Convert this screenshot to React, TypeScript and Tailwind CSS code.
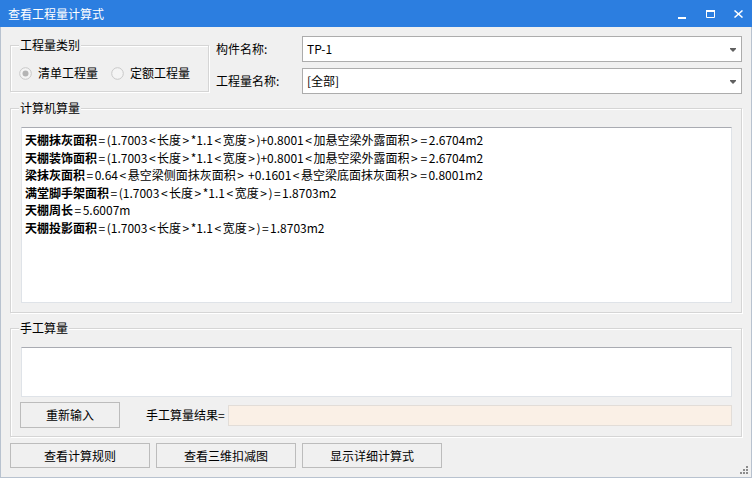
import React from "react";

function Group({ title, className, children }: { title: string; className: string; children?: React.ReactNode }) {
  return (
    <div className={"relative border border-[#d5d5d5] shadow-[inset_1px_1px_0_#ffffff,1px_1px_0_#ffffff] " + className}>
      <span className="absolute left-[8px] top-[-9px] bg-[#f0f0f0] px-[1px] text-[12px] leading-[16px] text-black">{title}</span>
      {children}
    </div>
  );
}

function Radio({ checked }: { checked?: boolean }) {
  return (
    <svg width="13" height="13" viewBox="0 0 13 13" className="shrink-0">
      <circle cx="6.5" cy="6.5" r="5.8" fill="#f4f4f4" stroke="#c8c8c8" strokeWidth="1" />
      {checked && <circle cx="6.5" cy="6.5" r="3" fill="#b4b4b4" />}
    </svg>
  );
}

function Combo({ value }: { value: string }) {
  return (
    <div className="flex h-[26px] items-center justify-between border border-[#acacac] bg-white pl-[4px] pr-[5px] text-[12px] text-black">
      <span>{value}</span>
      <svg width="6" height="4" viewBox="0 0 6 4" className="mt-[1px]">
        <path d="M0 0 H6 V1 L3 4 L0 1 Z" fill="#606060" />
      </svg>
    </div>
  );
}

function Btn({ label, className }: { label: string; className: string }) {
  return (
    <div className={"flex items-center justify-center border border-[#bcbcbc] bg-[#f0f0f0] text-[12px] text-black " + className}>
      {label}
    </div>
  );
}

function Formula({ text }: { text: string }) {
  const parts = text.split(/([<>=])/);
  return (
    <>
      {parts.map((p, i) =>
        p === "<" || p === ">" || p === "=" ? (
          <span key={i} className="mx-[1.5px]">{p}</span>
        ) : (
          <span key={i}>{p}</span>
        )
      )}
    </>
  );
}

const lines: [string, string][] = [
  ["天棚抹灰面积", "=(1.7003<长度>*1.1<宽度>)+0.8001<加悬空梁外露面积>=2.6704m2"],
  ["天棚装饰面积", "=(1.7003<长度>*1.1<宽度>)+0.8001<加悬空梁外露面积>=2.6704m2"],
  ["梁抹灰面积", "=0.64<悬空梁侧面抹灰面积> +0.1601<悬空梁底面抹灰面积>=0.8001m2"],
  ["满堂脚手架面积", "=(1.7003<长度>*1.1<宽度>)=1.8703m2"],
  ["天棚周长", "=5.6007m"],
  ["天棚投影面积", "=(1.7003<长度>*1.1<宽度>)=1.8703m2"],
];

export default function App() {
  return (
    <div className="relative flex h-[478px] w-[752px] flex-col overflow-hidden font-['Noto_Sans_CJK_SC',sans-serif]">
      {/* Title bar */}
      <div className="flex h-[27px] shrink-0 items-center justify-between bg-[#2c7ee0] pl-[8px] text-[12px] text-white">
        <span>查看工程量计算式</span>
        <div className="flex items-center">
          <svg width="8" height="8" viewBox="0 0 8 8" className="mr-[20px] mt-[4px]">
            <rect x="0" y="5" width="8" height="2" fill="#ffffff" />
          </svg>
          <svg width="9" height="8" viewBox="0 0 9 8" className="mr-[19px]">
            <path d="M0.5 1 H8.5 V7.5 H0.5 Z" fill="none" stroke="#ffffff" strokeWidth="1" />
            <rect x="0" y="0" width="9" height="2" fill="#ffffff" />
          </svg>
          <svg width="9" height="8" viewBox="0 0 9 8" className="mr-[9px]">
            <path d="M0.5 0.5 L8.5 7.5 M8.5 0.5 L0.5 7.5" stroke="#ffffff" strokeWidth="1.5" />
          </svg>
        </div>
      </div>

      {/* Body */}
      <div className="flex flex-1 flex-col border-x border-b border-[#b8c2cf] bg-[#f0f0f0] px-[9px] text-[12px] text-black">
        {/* Row 1 */}
        <div className="mt-[9px] flex">
          <Group title="工程量类别" className="mt-[9px] h-[47px] w-[199px]">
            <div className="flex items-center pl-[8px] pt-[19px] leading-[16px]">
              <Radio checked />
              <span className="ml-[6px]">清单工程量</span>
              <span className="ml-[13px]"><Radio /></span>
              <span className="ml-[6px]">定额工程量</span>
            </div>
          </Group>
          <div className="ml-[7px] flex flex-1 flex-col gap-[6px]">
            <div className="flex items-center">
              <span className="w-[86px]">构件名称:</span>
              <div className="flex-1"><Combo value="TP-1" /></div>
            </div>
            <div className="flex items-center">
              <span className="w-[86px]">工程量名称:</span>
              <div className="flex-1"><Combo value="[全部]" /></div>
            </div>
          </div>
        </div>

        {/* Computer calculation */}
        <Group title="计算机算量" className="mt-[14px] h-[205px] pl-[10px] pr-[9px] pt-[18px] pb-[9px]">
          <div className="h-full border border-[#dfe3e8] border-t-[#a9abb2] bg-white pl-[3px] pt-[3px] text-[12px] leading-[17.5px]">
            {lines.map(([b, r], i) => (
              <div key={i} className="whitespace-pre">
                <span className="font-bold">{b}</span>
                <Formula text={r} />
              </div>
            ))}
          </div>
        </Group>

        {/* Manual */}
        <Group title="手工算量" className="mt-[15px] h-[109px] pl-[10px] pr-[9px] pt-[18px]">
          <div className="h-[50px] border border-[#dfe3e8] border-t-[#a9abb2] bg-white" />
          <div className="mt-[5px] flex items-center">
            <Btn label="重新输入" className="-ml-[1px] h-[26px] w-[100px]" />
            <span className="ml-[26px]">手工算量结果=</span>
            <div className="ml-[3px] h-[21px] flex-1 border border-[#e2ddd8] bg-[#faf0e6]" />
          </div>
        </Group>

        {/* Bottom buttons */}
        <div className="mt-[6px] flex gap-[6px]">
          <Btn label="查看计算规则" className="h-[25px] w-[140px]" />
          <Btn label="查看三维扣减图" className="h-[25px] w-[140px]" />
          <Btn label="显示详细计算式" className="h-[25px] w-[140px]" />
        </div>
      </div>

      {/* Resize grip */}
      <svg width="9" height="9" viewBox="0 0 9 9" className="absolute bottom-[3px] right-[3px]">
        <rect x="6" y="0" width="2" height="2" fill="#8c8c8c" />
        <rect x="3" y="3" width="2" height="2" fill="#8c8c8c" />
        <rect x="6" y="3" width="2" height="2" fill="#8c8c8c" />
        <rect x="0" y="6" width="2" height="2" fill="#8c8c8c" />
        <rect x="3" y="6" width="2" height="2" fill="#8c8c8c" />
        <rect x="6" y="6" width="2" height="2" fill="#8c8c8c" />
      </svg>
    </div>
  );
}
